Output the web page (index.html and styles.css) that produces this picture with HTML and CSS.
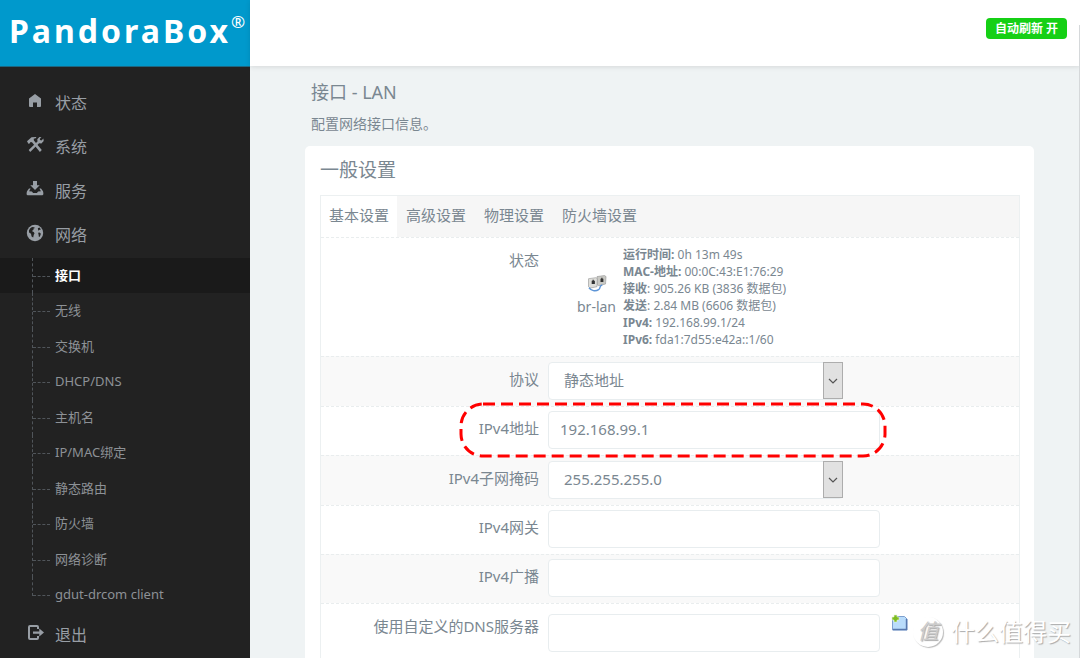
FILE: index.html
```html
<!DOCTYPE html>
<html lang="zh-CN">
<head>
<meta charset="utf-8">
<title>PandoraBox - LAN</title>
<link rel="stylesheet" href="styles.css">
</head>
<body>
<div class="shell">
  <aside class="sidebar">
    <a class="brand" href="#">PandoraBox<span class="brand-mark">®</span></a>
    <nav class="menu">
      <a class="menu-item" href="#"><svg class="menu-icon" viewBox="0 0 18 18"><path d="M9 2 3 6.500V14q0 1 1 1h3v-4.500h4V15h3q1 0 1-1V6.500z"/></svg>状态</a>
      <a class="menu-item" href="#"><svg class="menu-icon" viewBox="0 0 18 18"><path d="M1 5.200 5.500 1.200 10 1l.3 1-2.600.8.2 1.600L15.800 14l-1.900 2L6 6.200 4.600 6 3.600 7.600 2.400 7.800z"/><path d="M13.400 1 11.300 3.200l.2 2.200-8.800 8.700 1.500 1.900 8.900-8.700 2.300.1L17.700 5l-.3-2.600-1.900 2-1.500-.3-.2-1.400 1.700-1.500z"/></svg>系统</a>
      <a class="menu-item" href="#"><svg class="menu-icon" viewBox="0 0 18 18"><path d="M7 1h4v4.300h2.700L9 10 4.300 5.300H7z"/><path d="M3 8.500 1 11.300c-.8 3.200-.3 4 1 4h14c1.300 0 1.800-.8 1-4l-2-2.800h-1.600l1.500 2.800-2.800.2-1.200 1.600H7.100l-1.200-1.600-2.800-.2 1.500-2.800z"/></svg>服务</a>
      <a class="menu-item" href="#"><svg class="menu-icon" viewBox="0 0 18 18"><circle cx="9" cy="9" r="8.200"/><path class="globe-land" d="m4 4.500 2-1.500 2 .3 1 .6-1.400.5-.2 1.600-1.600 1 1.900.9.8 1.400-.8 1.800-.5 2.300-1.600-1-.6-2.600-1.900-1.300-.2-2zM11.800 4.200l1.600-.7 1.600 2-1.400.2-1.200 1zm.3 4.600 1.400-.3 1.400 1.300-1 2.600-1 .6-.3-2.200z"/></svg>网络</a>
      <ul class="submenu">
        <li class="active"><a href="#">接口</a></li>
        <li><a href="#">无线</a></li>
        <li><a href="#">交换机</a></li>
        <li><a href="#">DHCP/DNS</a></li>
        <li><a href="#">主机名</a></li>
        <li><a href="#">IP/MAC绑定</a></li>
        <li><a href="#">静态路由</a></li>
        <li><a href="#">防火墙</a></li>
        <li><a href="#">网络诊断</a></li>
        <li><a href="#">gdut-drcom client</a></li>
      </ul>
      <a class="menu-item" href="#"><svg class="menu-icon" viewBox="0 0 18 18"><path class="stroke" d="M12 5V3q0-1-1-1H4Q3 2 3 3v11q0 1 1 1h7q1 0 1-1v-2"/><path d="M7 7.500h6.300V4.500L18 8.500l-4.700 4V9.700H7z"/></svg>退出</a>
    </nav>
  </aside>
  <div class="page">
    <header class="topbar"><button class="refresh" type="button">自动刷新 开</button></header>
    <main class="content">
      <h2 class="title">接口 - LAN</h2>
      <p class="intro">配置网络接口信息。</p>
      <section class="card">
        <h3 class="card-title">一般设置</h3>
        <form class="panel">
          <nav class="tabs">
            <a class="tab selected" href="#">基本设置</a>
            <a class="tab" href="#">高级设置</a>
            <a class="tab" href="#">物理设置</a>
            <a class="tab" href="#">防火墙设置</a>
          </nav>
          <div class="row status-row">
            <span class="label">状态</span>
            <div class="status">
              <div class="iface">
                <svg class="iface-icon" viewBox="0 0 18 16"><path d="M9 1.500 16 .500l1.500 1-.5 7-6.500 1.500L9 9z" fill="#c9c9c4" stroke="#999" stroke-width=".6"/><path d="m1 3.500 7-1 1.300 1L9 11l-6.500 1.300L1 11z" fill="#dededa" stroke="#999" stroke-width=".6"/><path d="M4 5.500h.800V4.500h1.200v1h1v3H4zM12.300 3.500h.7v-1h1.200v1h.8V6.500h-2.700z" fill="#333"/><path d="M1.500 12c2 2.800 6 3.800 9 1.800 2.500-1.500 0-3.800 3.500-4.300" fill="none" stroke="#5c94d6" stroke-width="1.400"/></svg>
                <span>br-lan</span>
              </div>
              <div class="facts">
                <div><strong>运行时间:</strong> 0h 13m 49s</div>
                <div><strong>MAC-地址:</strong> 00:0C:43:E1:76:29</div>
                <div><strong>接收</strong>: 905.26 KB (3836 数据包)</div>
                <div><strong>发送</strong>: 2.84 MB (6606 数据包)</div>
                <div><strong>IPv4:</strong> 192.168.99.1/24</div>
                <div><strong>IPv6:</strong> fda1:7d55:e42a::1/60</div>
              </div>
            </div>
          </div>
          <div class="row select-row shaded">
            <label class="label" for="proto">协议</label>
            <div class="select-box">
              <select class="field" id="proto"><option>静态地址</option></select>
              <span class="arrow"><svg viewBox="0 0 10 6"><path d="m1 1 4 4 4-4"/></svg></span>
            </div>
          </div>
          <div class="row text-row marked">
            <label class="label" for="ipaddr">IPv4地址</label>
            <input class="field" id="ipaddr" type="text" value="192.168.99.1">
            <svg class="marker" viewBox="0 0 428 56"><rect x="2" y="2" width="424" height="52" rx="22"/></svg>
          </div>
          <div class="row select-row shaded">
            <label class="label" for="netmask">IPv4子网掩码</label>
            <div class="select-box">
              <select class="field" id="netmask"><option>255.255.255.0</option></select>
              <span class="arrow"><svg viewBox="0 0 10 6"><path d="m1 1 4 4 4-4"/></svg></span>
            </div>
          </div>
          <div class="row text-row">
            <label class="label" for="gateway">IPv4网关</label>
            <input class="field" id="gateway" type="text">
          </div>
          <div class="row text-row shaded">
            <label class="label" for="broadcast">IPv4广播</label>
            <input class="field" id="broadcast" type="text">
          </div>
          <div class="row dns-row">
            <label class="label" for="dns">使用自定义的DNS服务器</label>
            <div class="dns">
              <input class="field" id="dns" type="text">
              <button class="add" type="button" aria-label="添加"><svg viewBox="0 0 17 17"><path d="M3.500 2.500h10l2.500 2.500v11H1.500V6" fill="#b9dcfb" stroke="#7ea0cf"/><path d="M15.500 5v10.500H2" fill="none" stroke="#5878ae" stroke-width="1.400"/><path d="M3 1h3v2h2v3H6v2H3V6H1V3h2z" fill="#7ebc22" stroke="#e7f4d0" stroke-width=".6"/></svg></button>
            </div>
          </div>
        </form>
      </section>
    </main>
  </div>
  <div class="scroll-edge"></div>
  <div class="watermark"><span class="seal">值</span><span>什么值得买</span></div>
</div>
</body>
</html>
```
FILE: styles.css
```css
* { box-sizing: border-box; }
body {
  margin: 0;
  font: 15px/22px "Noto Sans", "Noto Sans CJK SC", sans-serif;
  color: #7a8791;
}
a { color: inherit; text-decoration: none; }
.shell { position: relative; display: flex; height: 100vh; overflow: hidden; }

.sidebar { width: 250px; flex: none; background: #222; color: #989ea5; }
.brand {
  display: flex;
  height: 67px;
  padding: 0 0 4px 9px;
  align-items: center;
  background: #0099cc;
  border-bottom: 1px solid #1c6680;
  color: #fff;
  font-size: 32px;
  font-weight: 700;
  letter-spacing: 3px;
}
.brand-mark { font-size: 17px; font-weight: 400; letter-spacing: 0; padding-bottom: 18px; }
.menu { padding-top: 14px; }
.menu-item { display: flex; align-items: center; gap: 11px; height: 44px; padding-left: 26px; font-size: 16px; }
.menu-icon { width: 18px; height: 18px; margin-bottom: 4px; fill: currentColor; }
.menu-icon .globe-land { fill: #222; }
.menu-icon .stroke { fill: none; stroke: currentColor; stroke-width: 2; }
.submenu { margin: 0; padding: 1px 0 0; list-style: none; font-size: 13px; color: #8d9196; }
.submenu li { position: relative; height: 35px; line-height: 35px; padding-left: 55px; }
.submenu li:nth-child(even) { height: 36px; }
.submenu li::before { content: ""; position: absolute; left: 32px; top: 0; bottom: 0; border-left: 1px dashed #50555a; }
.submenu li::after { content: ""; position: absolute; left: 33px; top: 18px; width: 17px; border-top: 1px dashed #50555a; }
.submenu li:last-child::before { bottom: 17px; }
.submenu a { display: block; }
.submenu .active { background: #1a1a1a; color: #fff; font-weight: 700; }

.page { flex: 1; display: flex; flex-direction: column; background: #eff3f4; }
.topbar {
  display: flex;
  flex: none;
  justify-content: flex-end;
  height: 66px;
  padding: 18px 13px 0 0;
  background: #fff;
  box-shadow: 0 1px 5px rgba(0, 0, 0, .11);
}
.refresh {
  height: 21px;
  padding: 0 9px;
  border: 0;
  border-radius: 4px;
  background: #15d015;
  color: #fff;
  font: 700 12px/20px "Noto Sans", "Noto Sans CJK SC", sans-serif;
}
.content { flex: 1; display: flex; flex-direction: column; padding: 14px 46px 0 55px; }
.title { margin: 0 6px; font-size: 18px; line-height: 24px; font-weight: 400; }
.intro { margin: 9px 6px 11px; font-size: 14px; }
.card { flex: 1; display: flex; flex-direction: column; padding: 10px 14px 0 15px; background: #fff; border-radius: 5px 5px 0 0; }
.card-title { margin: 0 0 11px; font-size: 19px; line-height: 28px; font-weight: 400; }
.panel { flex: 1; border: 1px solid #ecf0f1; border-bottom: 0; }
.tabs { display: flex; height: 41px; background: #f6f6f6; }
.tab { padding: 0 9px; line-height: 39px; }
.tab.selected { padding: 0 8px; background: #fff; }

.row { display: grid; grid-template-columns: 218px 1fr; column-gap: 9px; align-items: start; border-top: 1px dashed #e9edee; }
.shaded { background: #f9f9f9; }
.label { text-align: right; }
.field {
  width: 332px;
  height: 38px;
  padding: 0 11px 2px;
  border: 1px solid #e8edef;
  border-radius: 4px;
  background: #fff;
  color: inherit;
  font: inherit;
}
.status-row { padding: 8px 0; }
.status-row .label { padding-top: 3px; }
.status { display: flex; padding-left: 29px; gap: 7px; }
.iface { display: flex; flex-direction: column; align-items: center; padding-top: 29px; gap: 4px; font-size: 14px; }
.iface-icon { width: 20px; height: 17px; }
.facts { font-size: 12px; line-height: 17px; }

.select-row { padding: 5px 0 6px; }
.select-row .label, .text-row .label { padding-top: 6px; }
.select-box { position: relative; width: 295px; height: 38px; }
.select-box .field { width: 100%; padding: 0 30px 2px 15px; appearance: none; }
.arrow {
  position: absolute;
  top: 0;
  right: 0;
  display: flex;
  align-items: center;
  justify-content: center;
  width: 20px;
  height: 37px;
  background: #e1e1e1;
  border: 1px solid #adadad;
  pointer-events: none;
}
.arrow svg { width: 10px; height: 6px; fill: none; stroke: #555; stroke-width: 1.2; }
.text-row { padding: 4px 0 6px; }
.marked { position: relative; }
.marker { position: absolute; left: 138px; top: -5px; width: 428px; height: 56px; fill: none; stroke: #f00; stroke-width: 3; stroke-dasharray: 12 6; pointer-events: none; }
.dns-row { padding-top: 10px; }
.dns-row .label { padding-top: 1px; }
.dns { display: flex; gap: 11px; }
.add { width: 17px; height: 17px; padding: 0; border: 0; background: none; }
.add svg { display: block; width: 17px; height: 17px; }

.scroll-edge { position: absolute; top: 25px; right: 0; bottom: 0; width: 1px; background: #d5d8da; }
.watermark {
  position: absolute;
  right: 9px;
  bottom: 11px;
  display: flex;
  align-items: center;
  gap: 8px;
  color: #fff;
  font-size: 24px;
  line-height: 30px;
  text-shadow: 1px 1px 1px #aaa;
}
.seal {
  width: 30px;
  height: 30px;
  border-radius: 50%;
  box-shadow: 1px 1px 1px #bbb;
  color: #ccc;
  font-size: 21px;
  line-height: 28px;
  font-style: italic;
  text-align: center;
}
```
